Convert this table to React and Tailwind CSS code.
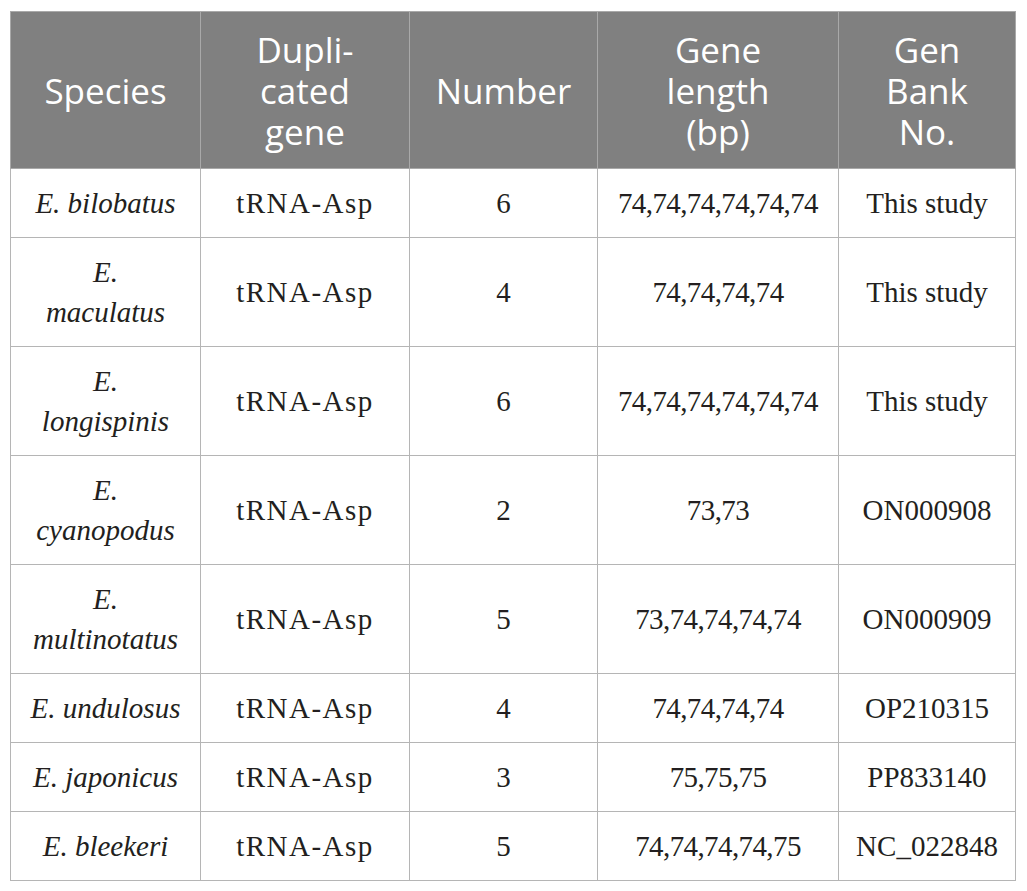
import React from "react";

const rows = [
  { sp: ["E. bilobatus"], n: "6", len: "74,74,74,74,74,74", gb: "This study" },
  { sp: ["E.", "maculatus"], n: "4", len: "74,74,74,74", gb: "This study" },
  { sp: ["E.", "longispinis"], n: "6", len: "74,74,74,74,74,74", gb: "This study" },
  { sp: ["E.", "cyanopodus"], n: "2", len: "73,73", gb: "ON000908" },
  { sp: ["E.", "multinotatus"], n: "5", len: "73,74,74,74,74", gb: "ON000909" },
  { sp: ["E. undulosus"], n: "4", len: "74,74,74,74", gb: "OP210315" },
  { sp: ["E. japonicus"], n: "3", len: "75,75,75", gb: "PP833140" },
  { sp: ["E. bleekeri"], n: "5", len: "74,74,74,74,75", gb: "NC_022848" },
];

const headers = [
  ["Species"],
  ["Dupli-", "cated", "gene"],
  ["Number"],
  ["Gene", "length", "(bp)"],
  ["Gen", "Bank", "No."],
];

export default function App() {
  return (
    <div className="bg-white w-[1027px] h-[891px] pt-[11px] pl-[10px]">
      <table className="table-fixed border-collapse w-[1005px] text-center">
        <colgroup>
          <col className="w-[190px]" />
          <col className="w-[209px]" />
          <col className="w-[188px]" />
          <col className="w-[241px]" />
          <col className="w-[177px]" />
        </colgroup>
        <thead>
          <tr className="h-[157px] bg-[#808080]">
            {headers.map((h, i) => (
              <th
                key={i}
                className="border border-[#a9a9a9] p-0 align-middle font-normal text-white text-[35px] leading-[41px]"
                style={{ fontFamily: '"Open Sans", "Noto Sans", sans-serif' }}
              >
                {h.map((l, j) => (
                  <div key={j} className="h-[41px]">{l}</div>
                ))}
              </th>
            ))}
          </tr>
        </thead>
        <tbody
          className="text-[#231f20] text-[29px] leading-[40px]"
          style={{ fontFamily: '"Liberation Serif", "Times New Roman", serif' }}
        >
          {rows.map((r, i) => (
            <tr key={i} className={r.sp.length > 1 ? "h-[109px]" : "h-[69px]"}>
              <td className="border border-[#b5b5b5] p-0 align-middle italic">
                {r.sp.map((l, j) => (
                  <div key={j}>{l}</div>
                ))}
              </td>
              <td className="border border-[#b5b5b5] p-0 align-middle tracking-[1.5px]">tRNA-Asp</td>
              <td className="border border-[#b5b5b5] p-0 align-middle">{r.n}</td>
              <td className="border border-[#b5b5b5] p-0 align-middle tracking-[-0.6px]">{r.len}</td>
              <td className="border border-[#b5b5b5] p-0 align-middle">{r.gb}</td>
            </tr>
          ))}
        </tbody>
      </table>
    </div>
  );
}
